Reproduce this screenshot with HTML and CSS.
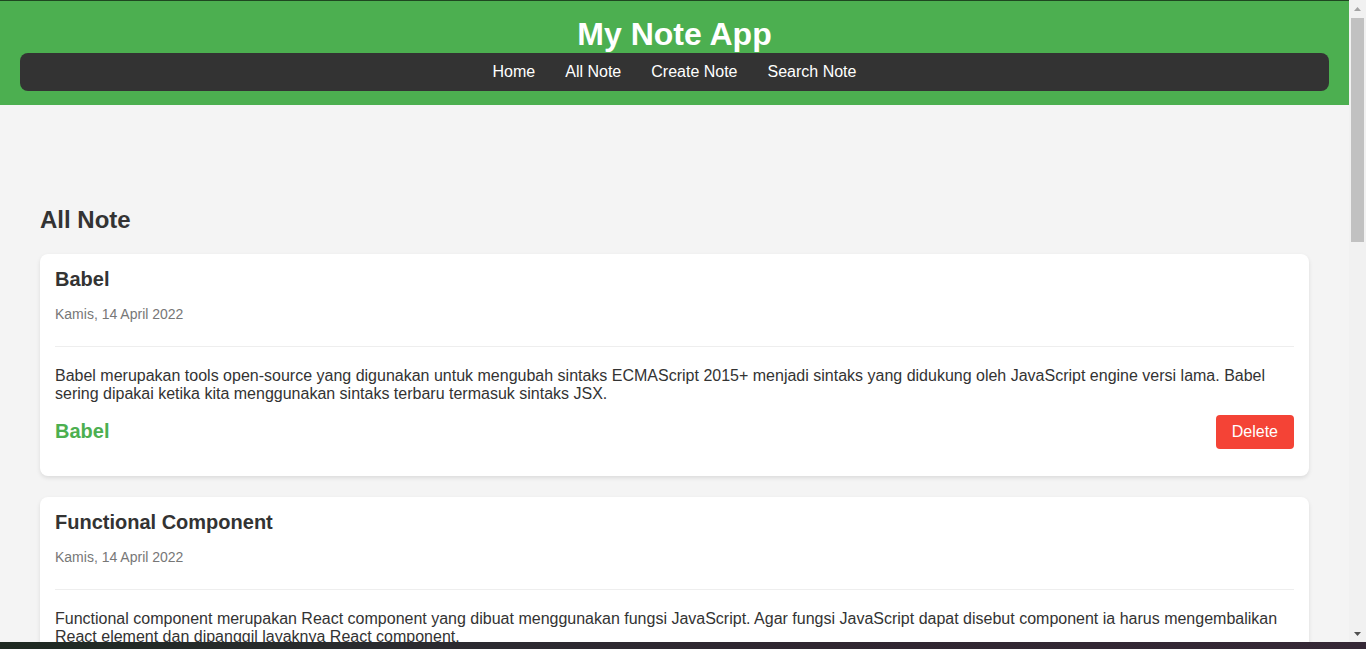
FILE: index.html
```html
<!DOCTYPE html>
<html lang="id">
<head>
<meta charset="utf-8">
<title>My Note App</title>
<link rel="stylesheet" href="styles.css">
</head>
<body>
<div class="page">
  <header class="app-header">
    <h1 class="app-title">My Note App</h1>
    <nav class="app-nav">
      <a class="nav-link" href="#">Home</a>
      <a class="nav-link" href="#">All Note</a>
      <a class="nav-link" href="#">Create Note</a>
      <a class="nav-link" href="#">Search Note</a>
    </nav>
  </header>
  <main class="content">
    <h2 class="section-title">All Note</h2>
    <article class="note-card">
      <h3 class="note-title">Babel</h3>
      <p class="note-date">Kamis, 14 April 2022</p>
      <hr class="note-divider">
      <p class="note-body">Babel merupakan tools open-source yang digunakan untuk mengubah sintaks ECMAScript 2015+ menjadi sintaks yang didukung oleh JavaScript engine versi lama. Babel sering dipakai ketika kita menggunakan sintaks terbaru termasuk sintaks JSX.</p>
      <div class="note-footer">
        <span class="note-tag">Babel</span>
        <button class="btn-delete">Delete</button>
      </div>
    </article>
    <article class="note-card">
      <h3 class="note-title">Functional Component</h3>
      <p class="note-date">Kamis, 14 April 2022</p>
      <hr class="note-divider">
      <p class="note-body">Functional component merupakan React component yang dibuat menggunakan fungsi JavaScript. Agar fungsi JavaScript dapat disebut component ia harus mengembalikan React element dan dipanggil layaknya React component.</p>
      <div class="note-footer">
        <span class="note-tag">React</span>
        <button class="btn-delete">Delete</button>
      </div>
    </article>
  </main>
</div>
<div class="scrollbar" aria-hidden="true">
  <div class="scroll-arrow"><svg width="7" height="4" viewBox="0 0 7 4"><path d="M0 4 L3.5 0 L7 4 Z" fill="#a3a3a3"/></svg></div>
  <div class="scroll-track"><div class="scroll-thumb"></div></div>
  <div class="scroll-arrow"><svg width="7" height="4" viewBox="0 0 7 4"><path d="M0 0 L7 0 L3.5 4 Z" fill="#505050"/></svg></div>
</div>
<div class="taskbar"></div>
</body>
</html>
```

FILE: styles.css
```css
body {
  margin: 0;
  background: #f4f4f4;
  font-family: "Liberation Sans", Arial, sans-serif;
  color: #333;
}
.page {
  margin-right: 17px;
}
.app-header {
  background: #4caf50;
  border-top: 1px solid #1e4620;
  padding: 15px 20px 14px;
  text-align: center;
}
.app-title {
  margin: 0;
  font-size: 32px;
  line-height: 37px;
  color: #fff;
  font-weight: bold;
}
.app-nav {
  background: #333;
  border-radius: 8px;
  padding: 10px 0;
  display: flex;
  justify-content: center;
  gap: 30px;
}
.nav-link {
  color: #fff;
  text-decoration: none;
  font-size: 16px;
  line-height: 18px;
}
.content {
  padding: 101px 40px 20px;
}
.section-title {
  margin: 0 0 20px;
  font-size: 24px;
  line-height: 28px;
}
.note-card {
  background: #fff;
  border-radius: 8px;
  box-shadow: 0 2px 4px rgba(0, 0, 0, 0.1);
  padding: 14px 15px 27px;
  margin-bottom: 21px;
}
.note-title {
  margin: 0;
  font-size: 20px;
  line-height: 23px;
}
.note-date {
  margin: 15px 0 0;
  font-size: 14px;
  line-height: 16px;
  color: #777;
}
.note-divider {
  margin: 24px 0 0;
  border: 0;
  border-top: 1px solid #eee;
}
.note-body {
  margin: 20px 0 0;
  font-size: 16px;
  line-height: 18px;
}
.note-footer {
  margin-top: 12px;
  display: flex;
  justify-content: space-between;
  align-items: center;
}
.note-tag {
  color: #4caf50;
  font-size: 20px;
  line-height: 22px;
  font-weight: bold;
  margin-bottom: 2px;
}
.btn-delete {
  background: #f44336;
  color: #fff;
  border: 0;
  border-radius: 4px;
  font-family: inherit;
  font-size: 16px;
  line-height: 18px;
  padding: 8px 16px;
}
.scrollbar {
  position: fixed;
  top: 0;
  right: 0;
  bottom: 7px;
  width: 17px;
  background: #f1f1f1;
  display: flex;
  flex-direction: column;
}
.scroll-arrow {
  height: 17px;
  display: flex;
  align-items: center;
  justify-content: center;
}
.scroll-track {
  flex: 1;
  padding: 1px 2px 0;
}
.scroll-thumb {
  height: 224px;
  background: #c1c1c1;
}
.taskbar {
  position: fixed;
  left: 0;
  right: 0;
  bottom: 0;
  height: 7px;
  background: linear-gradient(90deg, #1f2a22 0%, #2b2b30 30%, #2f2630 60%, #352836 100%);
}
```
